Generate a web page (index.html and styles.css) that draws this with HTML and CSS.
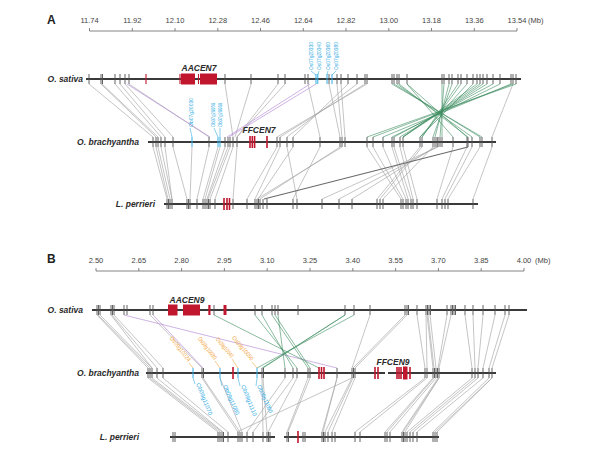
FILE: index.html
```html
<!DOCTYPE html>
<html lang="en">
<head>
<meta charset="utf-8">
<title>Centromere synteny</title>
<link rel="stylesheet" href="styles.css">
</head>
<body>
<main class="figure">
  <section class="panel panel-a">
    <svg class="plot plot-a" viewBox="0 0 600 230" width="600" height="230" xmlns="http://www.w3.org/2000/svg">
      <text class="panel-letter" x="47" y="24">A</text>
      <!-- scale -->
      <path class="scale" d="M89.5 31H517M89.5 28v3M132.3 28v3M175 28v3M217.8 28v3M260.5 28v3M303.3 28v3M346 28v3M388.8 28v3M431.5 28v3M474.3 28v3M517 28v3"/>
      <g class="scale-num">
        <text x="89.5" y="23">11.74</text>
        <text x="132.3" y="23">11.92</text>
        <text x="175" y="23">12.10</text>
        <text x="217.8" y="23">12.28</text>
        <text x="260.5" y="23">12.46</text>
        <text x="303.3" y="23">12.64</text>
        <text x="346" y="23">12.82</text>
        <text x="388.8" y="23">13.00</text>
        <text x="431.5" y="23">13.18</text>
        <text x="474.3" y="23">13.36</text>
        <text x="517" y="23">13.54</text>
      </g>
      <text class="scale-unit" x="528" y="23">(Mb)</text>

      <!-- links sativa -> brachyantha -->
      <path class="link" d="M89 84L153 137M101 84L156 137M102 84L158 137M115 84L161 137M120 84L165 137M125 84L173 137M129 84L209 137M225 84L233 137M251 84L235 137M278 84L237 137M285 84L237 137M308 84L320 137M329 84L340 137M337 84L342 137M341 84L345 137M348 84L293 137M357 84L287 137M365 84L280 137M367 84L277 137M513 84L492 137"/>
      <path class="link link-purple" d="M127 84L210 137M310 84L227 137M316 84L229 137"/>
      <path class="link link-green" d="M392 84L482 137M394 84L480 137M397 84L472 137M399 84L468 137M407 84L467 137M407 84L453 137M442 84L442 137M444 84L440 137M449 84L435 137M452 84L433 137M458 84L422 137M461 84L422 137M467 84L420 137M473 84L420 137M477 84L403 137M480 84L403 137M483 84L403 137M487 84L400 137M493 84L394 137M500 84L392 137M511 84L383 137M513 84L373 137M516 84L367 137"/>
      <!-- links brachyantha -> perrieri -->
      <path class="link" d="M153 147L167 199M156 147L168 199M158 147L170 199M161 147L172 199M165 147L172 199M173 147L187 199M192 147L190 199M209 147L197 199M218 147L203 199M220 147L205 199M225 147L207 199M228 147L208 199M230 147L210 199M233 147L215 199M237 147L233 199M277 147L247 199M280 147L255 199M287 147L297 199M293 147L258 199M320 147L293 199M340 147L260 199M342 147L257 199M367 147L401 199M373 147L403 199M383 147L406 199M392 147L408 199M394 147L411 199M400 147L413 199M403 147L417 199M420 147L377 199M422 147L380 199M433 147L383 199M435 147L352 199M437 147L339 199M438 147L322 199M453 147L437 199M467 147L442 199M472 147L445 199M480 147L448 199M492 147L473 199"/>
      <path class="link link-dark" d="M468 147L264 199"/>

      <!-- O. sativa -->
      <text class="species" x="83" y="82">O. sativa</text>
      <path class="chrom" d="M86 79H521"/>
      <path class="tick" d="M89 74v10M101 74v10M102.5 74v10M115 74v10M120 74v10M125 74v10M129 74v10M225 74v10M251 74v10M278 74v10M285 74v10M305 74v10M308 74v10M329 74v10M337 74v10M341 74v10M348 74v10M357 74v10M365 74v10M367 74v10M392 74v10M394 74v10M397 74v10M399 74v10M407 74v10M442 74v10M444 74v10M449 74v10M452 74v10M458 74v10M461 74v10M467 74v10M473 74v10M477 74v10M480 74v10M483 74v10M487 74v10M493 74v10M500 74v10M511 74v10M513 74v10M516 74v10"/>
      <path class="tick tick-blue" d="M316 74v10M317.8 74v10M327 74v10M332 74v10"/>
      <path class="tick tick-red-thin" d="M146 74v10M180 74v10M198.5 74v10"/>
      <rect class="cen-box" x="181" y="73.5" width="14" height="11"/>
      <rect class="cen-box" x="200" y="73.5" width="17" height="11"/>
      <text class="cen-label" x="199" y="70.5">AACEN7</text>
      <path class="leader-blue" d="M311 71L316 75M319 71L317.8 75M328 71L327 75M336 71L332 75"/>
      <text class="gene gene-blue" transform="translate(313 70) rotate(-90)" textLength="28" lengthAdjust="spacingAndGlyphs">Os07g20330</text>
      <text class="gene gene-blue" transform="translate(321 70) rotate(-90)" textLength="28" lengthAdjust="spacingAndGlyphs">Os07g20340</text>
      <text class="gene gene-blue" transform="translate(330 70) rotate(-90)" textLength="28" lengthAdjust="spacingAndGlyphs">Os07g20360</text>
      <text class="gene gene-blue" transform="translate(338 70) rotate(-90)" textLength="28" lengthAdjust="spacingAndGlyphs">Os07g20380</text>

      <!-- O. brachyantha -->
      <text class="species" x="139" y="145">O. brachyantha</text>
      <path class="chrom" d="M148 142H496"/>
      <path class="tick" d="M153 137v10M156 137v10M158 137v10M161 137v10M165 137v10M173 137v10M209 137v10M225 137v10M228 137v10M230 137v10M233 137v10M237 137v10M277 137v10M280 137v10M287 137v10M293 137v10M320 137v10M340 137v10M342 137v10M345 137v10M367 137v10M373 137v10M383 137v10M392 137v10M394 137v10M400 137v10M403 137v10M420 137v10M422 137v10M433 137v10M435 137v10M437 137v10M438 137v10M440 137v10M442 137v10M453 137v10M467 137v10M468 137v10M472 137v10M480 137v10M482 137v10M492 137v10"/>
      <path class="tick tick-blue" d="M192 137v10M218 137v10M220 137v10"/>
      <path class="tick tick-red" d="M250 136v12M252.3 136v12M254.6 136v12M267 136v12"/>
      <text class="cen-label" x="259" y="133">FFCEN7</text>
      <path class="leader-blue" d="M190 128L192 137M214 128L218 137M220 128L220 137"/>
      <text class="gene gene-blue" transform="translate(193 127) rotate(-90)" textLength="29" lengthAdjust="spacingAndGlyphs">Ob07g20030</text>
      <text class="gene gene-blue" transform="translate(215 127) rotate(-90)" textLength="24" lengthAdjust="spacingAndGlyphs">Ob07g20050</text>
      <text class="gene gene-blue" transform="translate(222 127) rotate(-90)" textLength="24" lengthAdjust="spacingAndGlyphs">Ob07g20060</text>

      <!-- L. perrieri -->
      <text class="species" x="155" y="207">L. perrieri</text>
      <path class="chrom" d="M164 204H478"/>
      <path class="tick" d="M167 199v10M168.5 199v10M170 199v10M172 199v10M187 199v10M188.5 199v10M190 199v10M197 199v10M203 199v10M205 199v10M207 199v10M208.5 199v10M210 199v10M215 199v10M233 199v10M247 199v10M255 199v10M257 199v10M258.5 199v10M260 199v10M263 199v10M267 199v10M293 199v10M297 199v10M322 199v10M339 199v10M352 199v10M377 199v10M380 199v10M383 199v10M401 199v10M403 199v10M406 199v10M408 199v10M411 199v10M413 199v10M417 199v10M437 199v10M442 199v10M445 199v10M448 199v10M473 199v10"/>
      <path class="tick tick-red" d="M224 198v12M227 198v12M229.5 198v12"/>
    </svg>
  </section>

  <section class="panel panel-b">
    <svg class="plot plot-b" viewBox="0 230 600 229" width="600" height="229" xmlns="http://www.w3.org/2000/svg">
      <text class="panel-letter" x="47" y="263">B</text>
      <path class="scale" d="M96 271H524M96 268v3M138.8 268v3M181.6 268v3M224.4 268v3M267.2 268v3M310 268v3M352.8 268v3M395.6 268v3M438.4 268v3M481.2 268v3M524 268v3"/>
      <g class="scale-num">
        <text x="96" y="262.5">2.50</text>
        <text x="138.8" y="262.5">2.65</text>
        <text x="181.6" y="262.5">2.80</text>
        <text x="224.4" y="262.5">2.95</text>
        <text x="267.2" y="262.5">3.10</text>
        <text x="310" y="262.5">3.25</text>
        <text x="352.8" y="262.5">3.40</text>
        <text x="395.6" y="262.5">3.55</text>
        <text x="438.4" y="262.5">3.70</text>
        <text x="481.2" y="262.5">3.85</text>
        <text x="524" y="262.5">4.00</text>
      </g>
      <text class="scale-unit" x="535" y="262.5">(Mb)</text>

      <!-- links sativa -> brachyantha -->
      <path class="link" d="M97 315L148 368M98 315L150 368M100 315L152 368M111 315L152 368M112 315L157 368M114 315L163 368M150 315L202 368M370 315L352 368M405 315L353 368M407 315L355 368M417 315L425 368M426 315L427 368M427 315L433 368M428 315L434 368M430 315L436 368M447 315L438 368M451 315L439 368M465 315L472 368M473 315L475 368M483 315L478 368M495 315L483 368M505 315L489 368M509 315L492 368"/>
      <path class="link link-purple" d="M124 315L337 368M153 315L203 368"/>
      <path class="link link-green" d="M214 315L319 368M255 315L297 368M262 315L293 368M272 315L308 368M275 315L310 368M278 315L285 368M345 315L263 368M354 315L257 368M345 315L262 368"/>
      <!-- links brachyantha -> perrieri -->
      <path class="link" d="M148 378L218 432M150 378L220 432M152 378L222 432M157 378L223 432M163 378L228 432M202 378L238 432M203 378L240 432M220 378L242 432M262 378L263 432M263 378L267 432M285 378L247 432M293 378L253 432M297 378L268 432M308 378L287 432M310 378L288 432M337 378L322 432M337 378L323 432M352 378L325 432M352 378L237 432M353 378L328 432M355 378L332 432M425 378L355 432M427 378L360 432M433 378L385 432M434 378L387 432M436 378L390 432M438 378L402 432M439 378L403 432M439 378L405 432M472 378L407 432M475 378L410 432M478 378L413 432M483 378L417 432M489 378L433 432M492 378L435 432M492 378L437 432"/>

      <!-- O. sativa -->
      <text class="species" x="83" y="313">O. sativa</text>
      <path class="chrom" d="M92 310H527"/>
      <path class="tick" d="M97 305v10M98.5 305v10M100 305v10M111 305v10M112.5 305v10M114 305v10M124 305v10M127 305v10M150 305v10M153 305v10M214 305v10M255 305v10M262 305v10M272 305v10M275 305v10M278 305v10M298 305v10M345 305v10M354 305v10M370 305v10M405 305v10M407 305v10M408.5 305v10M417 305v10M426 305v10M427.5 305v10M429 305v10M430.5 305v10M447 305v10M451 305v10M452.5 305v10M454 305v10M455.5 305v10M465 305v10M473 305v10M483 305v10M495 305v10M505 305v10M509 305v10"/>
      <rect class="cen-box" x="168" y="304.5" width="9.5" height="11"/>
      <rect class="cen-box" x="183" y="304.5" width="17" height="11"/>
      <rect class="cen-box" x="208.3" y="305" width="2.2" height="10"/>
      <rect class="cen-box" x="223.5" y="305" width="3" height="10"/>
      <text class="cen-label" x="187" y="302.5">AACEN9</text>

      <!-- O. brachyantha -->
      <text class="species" x="139" y="376">O. brachyantha</text>
      <path class="chrom" d="M146 373H385M388 373H496"/>
      <path class="tick" d="M148 368v10M150 368v10M152 368v10M157 368v10M163 368v10M202 368v10M203.5 368v10M262 368v10M263.5 368v10M285 368v10M293 368v10M297 368v10M308 368v10M310 368v10M337 368v10M352 368v10M353.5 368v10M355 368v10M425 368v10M427 368v10M433 368v10M434.5 368v10M436 368v10M437.5 368v10M439 368v10M472 368v10M475 368v10M478 368v10M483 368v10M489 368v10M492 368v10"/>
      <path class="tick tick-blue" d="M193 368v10M220 368v10M238 368v10M257 368v10"/>
      <path class="tick tick-red" d="M233 367v12M319 367v12M321.5 367v12M324 367v12M375 367v12M378 367v12M397 367v12M399 367v12M401 367v12M410 367v12"/>
      <rect class="cen-box" x="403" y="366.5" width="4.5" height="13"/>
      <text class="cen-label" x="393" y="365">FFCEN9</text>

      <path class="leader-orange" d="M189 363L193 368M215 361L220 368M232 359L238 368M252 362L257 368"/>
      <text class="gene gene-orange" text-anchor="end" transform="translate(188 362) rotate(52)" textLength="30" lengthAdjust="spacingAndGlyphs">Os09g10024</text>
      <text class="gene gene-orange" text-anchor="end" transform="translate(214 360) rotate(52)" textLength="27" lengthAdjust="spacingAndGlyphs">Os09g10030</text>
      <text class="gene gene-orange" text-anchor="end" transform="translate(231 358) rotate(50)" textLength="24" lengthAdjust="spacingAndGlyphs">Os09g10040</text>
      <text class="gene gene-orange" text-anchor="end" transform="translate(251 361) rotate(50)" textLength="30" lengthAdjust="spacingAndGlyphs">Os09g10050</text>

      <path class="leader-blue" d="M193 378L195 384M220 378L222 386M238 378L240 386M257 378L256 386"/>
      <text class="gene gene-blue" transform="translate(196 384) rotate(68)" textLength="34" lengthAdjust="spacingAndGlyphs">Ob09g11070</text>
      <text class="gene gene-blue" transform="translate(223 386) rotate(66)" textLength="32" lengthAdjust="spacingAndGlyphs">Ob09g11080</text>
      <text class="gene gene-blue" transform="translate(241 386) rotate(68)" textLength="33" lengthAdjust="spacingAndGlyphs">Ob09g11110</text>
      <text class="gene gene-blue" transform="translate(257 386) rotate(66)" textLength="30" lengthAdjust="spacingAndGlyphs">Ob09g11090</text>

      <!-- L. perrieri -->
      <text class="species" x="139" y="440">L. perrieri</text>
      <path class="chrom" d="M170 437H275M284 437H439"/>
      <path class="tick" d="M173 432v10M175 432v10M218 432v10M220 432v10M222 432v10M223.5 432v10M228 432v10M238 432v10M240 432v10M242 432v10M247 432v10M253 432v10M263 432v10M267 432v10M268.5 432v10M270 432v10M287 432v10M288.5 432v10M303 432v10M305 432v10M322 432v10M323.5 432v10M325 432v10M328 432v10M332 432v10M335 432v10M355 432v10M360 432v10M385 432v10M387 432v10M390 432v10M402 432v10M403.5 432v10M405 432v10M407 432v10M410 432v10M413 432v10M417 432v10M433 432v10M435 432v10M437 432v10"/>
      <path class="tick tick-red" d="M298 431v12"/>
    </svg>
  </section>
</main>
</body>
</html>
```

FILE: styles.css
```css
html, body {
  margin: 0;
  padding: 0;
  background: #ffffff;
}

.figure {
  display: flex;
  flex-direction: column;
  width: 600px;
  height: 459px;
  overflow: hidden;
  font-family: "Liberation Sans", Arial, sans-serif;
}

.panel {
  display: block;
}

.plot {
  display: block;
}

.panel-letter {
  font-family: "Liberation Sans", Arial, sans-serif;
  font-weight: 700;
  font-size: 12px;
  fill: #222;
}

.scale {
  stroke: #666;
  stroke-width: 0.8;
  fill: none;
}

.scale-num text {
  font-family: "Liberation Sans", Arial, sans-serif;
  font-size: 7.5px;
  fill: #444;
  text-anchor: middle;
}

.scale-unit {
  font-family: "Liberation Sans", Arial, sans-serif;
  font-size: 7.5px;
  fill: #444;
}

.species {
  font-family: "Liberation Sans", Arial, sans-serif;
  font-weight: 700;
  font-style: italic;
  font-size: 8.5px;
  fill: #2a2a2a;
  text-anchor: end;
}

.cen-label {
  font-family: "Liberation Sans", Arial, sans-serif;
  font-weight: 700;
  font-style: italic;
  font-size: 8.5px;
  fill: #2a2a2a;
  text-anchor: middle;
}

.chrom {
  stroke: #3a3a3a;
  stroke-width: 2.2;
  fill: none;
}

.tick {
  stroke: #505050;
  stroke-width: 0.9;
  fill: none;
}

.tick-blue {
  stroke: #35ade3;
  stroke-width: 1;
}

.tick-red {
  stroke: #c0172e;
  stroke-width: 1.6;
}

.tick-red-thin {
  stroke: #c0172e;
  stroke-width: 1.1;
}

.cen-box {
  fill: #c0172e;
}

.link {
  stroke: #a6a6a6;
  stroke-width: 0.65;
  fill: none;
}

.link-dark {
  stroke: #6b6b6b;
  stroke-width: 1.1;
}

.link-purple {
  stroke: #b38ad6;
}

.link-green {
  stroke: #3d8d5f;
  stroke-width: 0.6;
}

.gene {
  font-family: "Liberation Sans", Arial, sans-serif;
  font-size: 6px;
}

.gene-blue {
  fill: #35ade3;
}

.gene-orange {
  fill: #f2a43a;
}

.leader-blue {
  stroke: #35ade3;
  stroke-width: 0.6;
  fill: none;
}

.leader-orange {
  stroke: #f2a43a;
  stroke-width: 0.6;
  fill: none;
}
```
